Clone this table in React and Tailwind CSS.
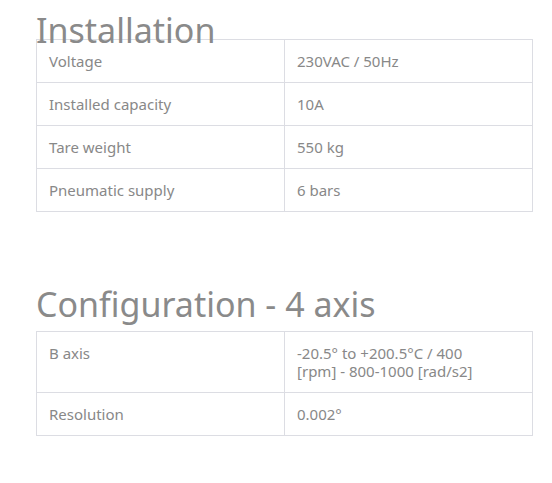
import React from 'react';

const sections = [
  {
    title: 'Installation',
    gap: '',
    head: '-mb-[11px]',
    rows: [
      ['Voltage', '230VAC / 50Hz'],
      ['Installed capacity', '10A'],
      ['Tare weight', '550 kg'],
      ['Pneumatic supply', '6 bars'],
    ],
  },
  {
    title: 'Configuration - 4 axis',
    gap: 'mt-[72px]',
    head: 'mb-[7px]',
    rows: [
      ['B axis', '-20.5° to +200.5°C / 400\n[rpm] - 800-1000 [rad/s2]'],
      ['Resolution', '0.002°'],
    ],
  },
];

export default function App() {
  return (
    <div
      className="min-h-[483px] bg-white px-9 pt-[10px] text-[#888888]"
      style={{ fontFamily: '"Noto Sans", "Open Sans", sans-serif' }}
    >
      {sections.map((s) => (
        <div key={s.title} className={s.gap}>
          <h2 className={`relative z-10 text-[34px] font-normal leading-[40px] text-[#8a8a8a] ${s.head}`}>
            {s.title}
          </h2>
          <table className="w-[496px] table-fixed border-collapse">
            <tbody>
              {s.rows.map(([k, v]) => (
                <tr key={k}>
                  <td className="w-[248px] border border-[#dcdde3] px-3 py-3 align-top text-[15px] leading-[18px]">
                    {k}
                  </td>
                  <td className="w-[248px] whitespace-pre-line border border-[#dcdde3] px-3 py-3 align-top text-[15px] leading-[18px]">
                    {v}
                  </td>
                </tr>
              ))}
            </tbody>
          </table>
        </div>
      ))}
    </div>
  );
}
